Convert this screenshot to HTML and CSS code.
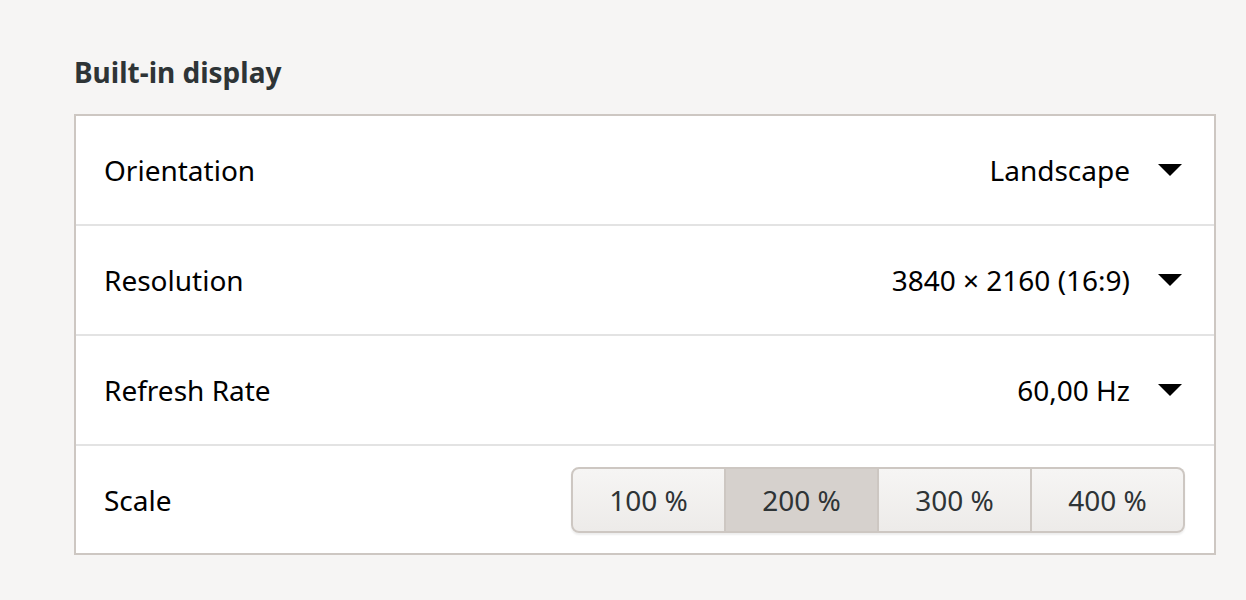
FILE: index.html
```html
<!DOCTYPE html>
<html>
<head>
<meta charset="utf-8">
<link rel="stylesheet" href="styles.css">
</head>
<body>
<main class="page">
  <h2 class="heading">Built-in display</h2>
  <div class="list">
    <div class="row">
      <span class="label">Orientation</span>
      <span class="combo"><span class="value">Landscape</span><svg class="arrow" width="24" height="12" viewBox="0 0 24 12"><path d="M0 0H24L12 12Z" fill="#000"/></svg></span>
    </div>
    <div class="row">
      <span class="label">Resolution</span>
      <span class="combo"><span class="value">3840 × 2160 (16:9)</span><svg class="arrow" width="24" height="12" viewBox="0 0 24 12"><path d="M0 0H24L12 12Z" fill="#000"/></svg></span>
    </div>
    <div class="row">
      <span class="label">Refresh Rate</span>
      <span class="combo"><span class="value">60,00 Hz</span><svg class="arrow" width="24" height="12" viewBox="0 0 24 12"><path d="M0 0H24L12 12Z" fill="#000"/></svg></span>
    </div>
    <div class="row row-scale">
      <span class="label">Scale</span>
      <div class="linked">
        <button class="seg">100 %</button>
        <button class="seg active">200 %</button>
        <button class="seg">300 %</button>
        <button class="seg">400 %</button>
      </div>
    </div>
  </div>
</main>
</body>
</html>
```
FILE: styles.css
```css
html, body {
  margin: 0;
  padding: 0;
  background: #f6f5f4;
}
body {
  font-family: "Noto Sans", "Open Sans", sans-serif;
  color: #000;
}
.page {
  padding: 52px 30px 0 74px;
  width: 1142px;
}
.heading {
  margin: 0 0 22px 0;
  font-size: 28px;
  font-weight: 700;
  color: #2e3436;
  line-height: 40px;
}
.list {
  background: #fff;
  border: 2px solid #cdc7c2;
  width: 1138px;
}
.row {
  height: 108px;
  display: flex;
  align-items: center;
  justify-content: space-between;
  padding: 0 32px 0 28px;
  border-bottom: 2px solid #e3e3e3;
  font-size: 28px;
}
.row:last-child {
  border-bottom: none;
  height: 107px;
  padding-right: 29px;
}
.combo {
  display: flex;
  align-items: center;
  gap: 28px;
}
.arrow {
  display: block;
}
.linked {
  display: flex;
  width: 614px;
  height: 66px;
  border-radius: 8px;
  box-shadow: 0 2px 2px rgba(0,0,0,0.07);
}
.seg {
  flex: 1 1 0;
  font-family: inherit;
  font-size: 28px;
  color: #2e3436;
  height: 66px;
  margin: 0;
  padding: 0;
  border: 2px solid #cdc7c2;
  border-left: none;
  background: linear-gradient(#f6f5f4, #edebe9);
}
.seg:first-child {
  border-left: 2px solid #cdc7c2;
  border-radius: 8px 0 0 8px;
}
.seg:last-child {
  border-radius: 0 8px 8px 0;
}
.seg.active {
  background: #d6d1cd;
}
```
